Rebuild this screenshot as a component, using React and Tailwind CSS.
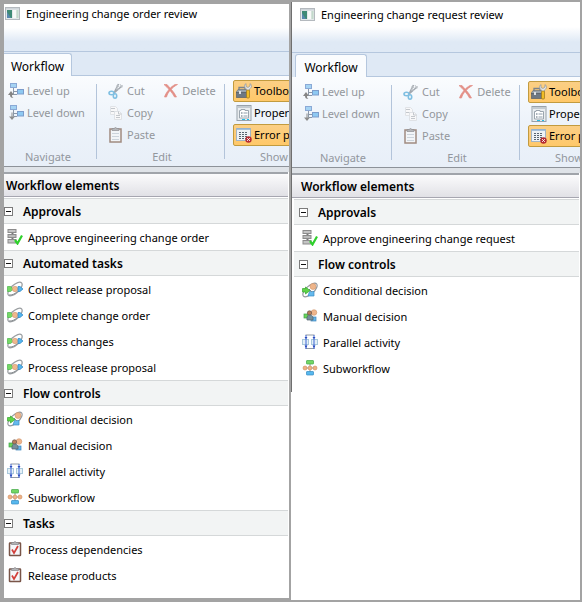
import React, { useState } from "react";
import { clsx } from "clsx";

function Svg({ children, className }) {
  return (
    <svg viewBox="0 0 16 16" className={clsx("h-4 w-4 shrink-0", className)} fill="none" aria-hidden="true">
      {children}
    </svg>
  );
}

function AppIcon() {
  return (
    <Svg>
      <rect x="0.5" y="1.5" width="14" height="12" fill="#e4e8ea" stroke="#b4b9be" />
      <rect x="1" y="2" width="13" height="1.500" fill="#cfd5da" />
      <rect x="2" y="4" width="5" height="8" fill="#3f8a75" />
      <path d="M2 12V6l4 6z" fill="#5788ad" />
      <rect x="8" y="4" width="3" height="8" fill="#f7f9f7" />
      <rect x="11.500" y="4" width="2" height="8" fill="#c3dacb" />
    </Svg>
  );
}

function LevelIcon({ down }) {
  return (
    <Svg>
      <path d="M5.5 5v6.5H9" stroke="#8b98a8" />
      <rect x="2.5" y="0.5" width="6" height="4" fill="#a5d3f3" stroke="#8aa9d6" />
      <rect x="9.5" y="6.500" width="6" height="4.500" fill="#8ec9f2" stroke="#7c9ccb" />
      <path d="M5.500 8.500H9" stroke="#8b98a8" />
      {down ? (
        <path d="M3.500 7.500v4H1l3 3.500 3-3.500H4.500v-4z" fill="#8c8c8c" />
      ) : (
        <path d="M0 12l3-4 3 4H4c0 2 .5 2.500 1.500 3-2.500 0-3.500-1-3.500-3z" fill="#858585" />
      )}
    </Svg>
  );
}

function CutIcon() {
  return (
    <Svg>
      <path d="M10.500 1L6.500 9M14.500 2.500L6 10" stroke="#a2a8af" strokeWidth="1.600" />
      <path d="M8.500 2.500l3 1.500M8 5l3 1.500M12 1l2 4" stroke="#c3c8cc" />
      <ellipse cx="3.500" cy="10" rx="2.500" ry="1.700" stroke="#7fbfe2" strokeWidth="1.600" />
      <ellipse cx="7" cy="13" rx="1.700" ry="2.200" stroke="#7fbfe2" strokeWidth="1.600" />
    </Svg>
  );
}

function CopyIcon() {
  return (
    <Svg>
      <path d="M2.500 1.500h5l2 2v6h-7z" fill="#f8f8f9" stroke="#e0e3e7" />
      <path d="M3 3.500h4M3 6.500h4" stroke="#c3c7cc" />
      <path d="M6.500 6.500h5l2 2v6h-7z" fill="#f8f8f9" stroke="#dfe2e6" />
      <path d="M8 10.500h4M8 12.500h4M10.500 6.500v2.500h3" stroke="#c3c7cc" />
    </Svg>
  );
}

function PasteIcon() {
  return (
    <Svg>
      <rect x="2" y="2" width="11" height="13" fill="#f2f5f8" stroke="#a08b80" strokeWidth="1.500" />
      <path d="M4 6.500h7M4 9.500h7M4 12.500h7" stroke="#ccd4dc" />
      <path d="M4 1.500h2l1.500-1 1.500 1h2v2H4z" fill="#b4b6b9" stroke="#8f8f92" strokeWidth="0.700" />
    </Svg>
  );
}

function DeleteIcon() {
  return (
    <Svg>
      <path d="M1 1.500h3C6 4 10.500 8 13.500 14h-2C9.500 10 5 5 1 1.500z" fill="#e38f87" stroke="#e38f87" strokeWidth="0.700" />
      <path d="M14.500 1.500C9 4.500 5 9 3.500 14H1.500C3 9 8 3.500 12 1.500z" fill="#e38f87" stroke="#e38f87" strokeWidth="0.700" />
    </Svg>
  );
}

function ToolboxIcon() {
  return (
    <Svg>
      <path d="M3 7V4.500h6V7" stroke="#7b838b" strokeWidth="1.300" />
      <path d="M2 6.500h10v3H0z" fill="#9aa4ad" stroke="#6b747c" strokeWidth="0.700" />
      <rect x="0.500" y="9.500" width="12" height="5" fill="#6d7883" stroke="#565f68" strokeWidth="0.700" />
      <rect x="3" y="8" width="2" height="3" fill="#dde1e4" />
      <path d="M10 0.500v3l2 1 2-1.500v-2.500c2 1.500 2 4-0.500 5.500V8h-3V6C8 4.500 8 2 10 .5z" fill="#e4e7e9" stroke="#8d9399" strokeWidth="0.700" />
      <rect x="10.500" y="7" width="3" height="8" rx="1" fill="#f1bd25" stroke="#9b741b" strokeWidth="0.700" />
    </Svg>
  );
}

function PropertiesIcon() {
  return (
    <Svg>
      <rect x="1" y="0.500" width="14" height="15" fill="#e9edf0" stroke="#98a1aa" />
      <path d="M2 2h12" stroke="#c3cbd2" strokeWidth="2" />
      <path d="M3.500 5.500v7.500h9V5.500H9V4.500H5v1z" fill="#fff" stroke="#9ba5ae" />
      <path d="M5 8h1.500M5 11h1.500" stroke="#526575" />
      <path d="M7.500 8h4M7.500 11h4" stroke="#8e9daa" />
      <path d="M6 14.500h3M11 14.500h2" stroke="#24bde6" />
    </Svg>
  );
}

function ErrorIcon() {
  return (
    <Svg>
      <rect x="0.500" y="1.500" width="14" height="12" fill="#eef2f5" stroke="#a3b4c4" />
      <path d="M1 2h13" stroke="#8fb0d0" strokeWidth="1.500" />
      <path d="M3 5.500h9M3 7.500h9M3 9.500h9M3 11.500h9" stroke="#596570" strokeDasharray="2 1" />
      <circle cx="12.500" cy="12.500" r="3.200" fill="#b62c32" />
      <path d="M11.200 11.200l2.600 2.600m0-2.600l-2.600 2.600" stroke="#fff" />
    </Svg>
  );
}

function ApproveIcon() {
  return (
    <Svg>
      <path d="M5.500 1v13" stroke="#777" strokeWidth="2" />
      <rect x="1" y="0.500" width="8" height="3" fill="#c4c4c4" stroke="#8b8b8b" />
      <rect x="1" y="5.500" width="8" height="3" fill="#bababa" stroke="#8b8b8b" />
      <rect x="1" y="10.500" width="8" height="3.500" fill="#c4c4c4" stroke="#8b8b8b" />
      <path d="M8 11l2.500 3.500L15 6.500" stroke="#2fd02c" strokeWidth="2.200" />
    </Svg>
  );
}

function AutomatedIcon() {
  return (
    <Svg>
      <ellipse cx="8" cy="8" rx="9" ry="4" transform="rotate(-43 8 8)" stroke="#9b9fa2" strokeWidth="1.300" />
      <path d="M0.500 5.500h3l3 2.500-3 2.500h-3z" fill="#76d965" stroke="#49b54a" strokeWidth="0.700" />
      <circle cx="8" cy="8" r="2.700" fill="#efb88d" stroke="#d49970" strokeWidth="0.600" />
      <path d="M11 5.500h2L16 8l-3 2.500h-2z" fill="#55b5ee" stroke="#2e86c3" strokeWidth="0.700" />
      <path d="M2 14c3 .3 6-1.200 8.500-3.500" stroke="#8a8f93" />
    </Svg>
  );
}

function ConditionalIcon() {
  return (
    <Svg>
      <ellipse cx="8" cy="8" rx="9" ry="4" transform="rotate(-43 8 8)" stroke="#94999e" strokeWidth="1.200" />
      <path d="M7.500 9.500h4.500V14H6z" fill="#65b9ed" stroke="#3b8cc3" strokeWidth="0.700" />
      <circle cx="11" cy="4.500" r="3" fill="#efb58a" stroke="#cf956d" strokeWidth="0.600" />
      <path d="M7 7l3 3" stroke="#7f8c97" />
      <path d="M0.500 6.500h3V5L8 8.500 3.500 12v-2h-3z" fill="#60d448" stroke="#35a52e" strokeWidth="0.700" />
    </Svg>
  );
}

function ManualIcon() {
  return (
    <Svg>
      <rect x="2" y="6" width="4" height="4" fill="#6cd45b" stroke="#3ba348" strokeWidth="0.700" />
      <circle cx="12" cy="4.500" r="2.800" fill="#efb58b" stroke="#cf936c" strokeWidth="0.600" />
      <rect x="9" y="9" width="5" height="4" fill="#65b5ea" stroke="#3e85bb" strokeWidth="0.700" />
      <circle cx="7.500" cy="5" r="2.200" fill="#b77d5a" stroke="#6b574c" strokeWidth="0.700" />
      <path d="M5 12c-.5-3 .5-5 3-5s3.500 2 3 5z" fill="#78909c" stroke="#50616d" strokeWidth="0.700" />
    </Svg>
  );
}

function ParallelIcon() {
  return (
    <Svg>
      <path d="M3.500 1h9M3.500 14.500h9" stroke="#929ba5" />
      <rect x="0.500" y="5.500" width="6" height="5" fill="#e4f0f7" stroke="#a9c8db" />
      <rect x="9.500" y="5.500" width="6" height="5" fill="#e4f0f7" stroke="#a9c8db" />
      <path d="M4 1v14M12 1v14" stroke="#3f66d6" strokeWidth="1" />
      <path d="M2.500 3h3L4 5zM10.500 3h3L12 5zM2.500 11.500h3L4 14zM10.500 11.500h3L12 14z" fill="#2447bd" />
    </Svg>
  );
}

function SubworkflowIcon() {
  return (
    <Svg>
      <path d="M8 4v8M4 8h8" stroke="#8d989f" />
      <rect x="4.500" y="0.500" width="7" height="3.500" rx="0.500" fill="#73d765" stroke="#42a946" strokeWidth="0.700" />
      <rect x="4.500" y="11.500" width="7" height="3.500" rx="0.500" fill="#57b8ee" stroke="#338bc3" strokeWidth="0.700" />
      <circle cx="3" cy="8" r="2" fill="#efb184" stroke="#cb8c60" strokeWidth="0.600" />
      <circle cx="8" cy="8" r="2" fill="#efb184" stroke="#cb8c60" strokeWidth="0.600" />
      <circle cx="13" cy="8" r="2" fill="#efb184" stroke="#cb8c60" strokeWidth="0.600" />
    </Svg>
  );
}

function TaskIcon() {
  return (
    <Svg>
      <rect x="2.500" y="2" width="11" height="12.500" rx="0.500" fill="#f5f7fa" stroke="#795548" strokeWidth="1.500" />
      <path d="M4.500 1.500h2l1.500-1 1.500 1h2v2h-7z" fill="#b3b3b5" stroke="#858589" strokeWidth="0.700" />
      <path d="M5 8.500l2 3.500 4-7" stroke="#d3403b" strokeWidth="1.700" />
    </Svg>
  );
}

const flowControls = {
  title: "Flow controls",
  items: [
    ["Conditional decision", ConditionalIcon],
    ["Manual decision", ManualIcon],
    ["Parallel activity", ParallelIcon],
    ["Subworkflow", SubworkflowIcon],
  ],
};

const orderGroups = [
  { title: "Approvals", items: [["Approve engineering change order", ApproveIcon]] },
  {
    title: "Automated tasks",
    items: [
      ["Collect release proposal", AutomatedIcon],
      ["Complete change order", AutomatedIcon],
      ["Process changes", AutomatedIcon],
      ["Process release proposal", AutomatedIcon],
    ],
  },
  flowControls,
  {
    title: "Tasks",
    items: [
      ["Process dependencies", TaskIcon],
      ["Release products", TaskIcon],
    ],
  },
];

const requestGroups = [
  { title: "Approvals", items: [["Approve engineering change request", ApproveIcon]] },
  flowControls,
];

function Command({ icon, children }) {
  return (
    <button type="button" disabled className="flex h-[22px] items-center gap-[3px] whitespace-nowrap text-[#93979c]">
      {icon}
      <span>{children}</span>
    </button>
  );
}

function Toggle({ icon, initial = false, children }) {
  const [on, setOn] = useState(initial);
  return (
    <button
      type="button"
      aria-pressed={on}
      onClick={() => setOn(!on)}
      className={clsx(
        "flex h-[22px] w-[90px] items-center gap-[2px] whitespace-nowrap rounded-[2px] border px-[2px] text-black",
        on ? "border-[#c29b3f] bg-linear-to-b from-[#fbcf85] to-[#ffc869]" : "border-transparent"
      )}
    >
      {icon}
      <span>{children}</span>
    </button>
  );
}

function RibbonGroup({ label, className, children }) {
  return (
    <div role="group" aria-label={label} className={clsx("flex shrink-0 flex-col justify-between", className)}>
      {children}
      <div className="text-center leading-4 text-[#92979e]">{label}</div>
    </div>
  );
}

function Separator() {
  return <div className="mt-1 mb-[6px] w-px shrink-0 bg-[#b3c4da]" />;
}

function Ribbon({ inset }) {
  return (
    <div
      className={clsx(
        "flex h-[91px] overflow-hidden border-b border-[#8d9299] bg-linear-to-b from-[#fafcfe] via-[#edf3fa] to-[#e8eff8] pt-1 pb-px",
        inset && "pl-[7px]"
      )}
    >
      <RibbonGroup label="Navigate" className="w-[92px] pr-2 pl-1">
        <div>
          <Command icon={<LevelIcon />}>Level up</Command>
          <Command icon={<LevelIcon down />}>Level down</Command>
        </div>
      </RibbonGroup>
      <Separator />
      <RibbonGroup label="Edit" className="w-[127px] pr-2 pl-[11px]">
        <div className="flex gap-2">
          <div>
            <Command icon={<CutIcon />}>Cut</Command>
            <Command icon={<CopyIcon />}>Copy</Command>
            <Command icon={<PasteIcon />}>Paste</Command>
          </div>
          <div>
            <Command icon={<DeleteIcon />}>Delete</Command>
          </div>
        </div>
      </RibbonGroup>
      <Separator />
      <RibbonGroup label="Show" className="w-[90px] pl-2">
        <div>
          <Toggle initial icon={<ToolboxIcon />}>Toolbox</Toggle>
          <Toggle icon={<PropertiesIcon />}>Properties</Toggle>
          <Toggle initial icon={<ErrorIcon />}>Error panel</Toggle>
        </div>
      </RibbonGroup>
    </div>
  );
}

function ElementGroup({ group, inset }) {
  const [open, setOpen] = useState(true);
  return (
    <section>
      <h3 className={clsx("mr-px", inset && "ml-[2px]")}>
        <button
          type="button"
          aria-expanded={open}
          onClick={() => setOpen(!open)}
          className={clsx(
            "flex h-[26px] w-full items-center gap-[10px] border-y border-[#d5d8d9] bg-[#f2f4f4] text-[12px] font-semibold text-black",
            inset && "pl-[5px]"
          )}
        >
          <svg viewBox="0 0 9 9" className="h-[9px] w-[9px] shrink-0" fill="none" aria-hidden="true">
            <rect x="0.500" y="0.500" width="8" height="8" fill="#fff" stroke="#7b7b7b" />
            <path d={open ? "M2 4.500h5" : "M2 4.500h5M4.500 2v5"} stroke="#111" />
          </svg>
          <span className="pt-[2px]">{group.title}</span>
        </button>
      </h3>
      {open && (
        <ul className={clsx(inset && "pl-[7px]")}>
          {group.items.map(([name, Icon]) => (
            <li key={name}>
              <button type="button" className="flex h-[26px] w-full items-center gap-[5px] whitespace-nowrap pl-[3px] text-black">
                <Icon />
                <span className="pt-[2px]">{name}</span>
              </button>
            </li>
          ))}
        </ul>
      )}
    </section>
  );
}

function ReviewWindow({ title, groups, inset = false }) {
  return (
    <section className="min-w-0 flex-1 overflow-hidden bg-white">
      <div className={clsx(inset && "min-h-[390px] border-l border-[#6f6f6f]")}>
        <header
          className={clsx(
            "border-b border-[#b5c7de] bg-linear-to-b from-white from-50% to-[#dfe9f5] to-80%",
            inset ? "h-[51px] pt-1 pl-[7px]" : "h-12 pt-px"
          )}
        >
          <h1 className="flex h-[18px] items-center gap-[5px] whitespace-nowrap pl-px text-black">
            <AppIcon />
            {title}
          </h1>
        </header>
        <div role="tablist" className={clsx("flex h-6 bg-[#dfe9f5]", inset && "pl-[3px]")}>
          <button
            type="button"
            role="tab"
            aria-selected="true"
            className={clsx(
              "mt-px shrink-0 border-t border-r border-[#b5c7de] bg-[#fafcfe] pt-1 text-[12px] leading-4 text-black",
              inset ? "w-[72px] rounded-t-[3px] border-l" : "w-[68px] rounded-tr-[3px]"
            )}
          >
            Workflow
          </button>
          <div className="flex-1 border-b border-[#b5c7de]" />
        </div>
        <Ribbon inset={inset} />
        <div className="h-[5px] bg-[#dfe3e8]" />
        <h2
          className={clsx(
            "mr-px mb-px h-[25px] border-t-2 border-b border-t-[#a0a4aa] border-b-[#a6a6b0] bg-linear-to-b from-[#fbfbfc] to-[#e1e1e6] text-[12px] font-semibold leading-6 text-black",
            inset ? "pl-[9px]" : "pl-[2px]"
          )}
        >
          Workflow elements
        </h2>
        {groups.map((group) => (
          <ElementGroup key={group.title} group={group} inset={inset} />
        ))}
      </div>
    </section>
  );
}

export default function App() {
  return (
    <main className="flex min-h-screen items-stretch bg-[#a3a3a3] pr-[2px] pl-1 font-['Noto_Sans','Open_Sans',sans-serif] text-[11px]">
      <div className="flex min-w-0 flex-[285] pt-1 pb-1">
        <ReviewWindow title="Engineering change order review" groups={orderGroups} />
      </div>
      <div className="flex min-w-0 flex-[289] pt-[2px] pb-[2px] pl-[2px]">
        <ReviewWindow title="Engineering change request review" groups={requestGroups} inset />
      </div>
    </main>
  );
}
